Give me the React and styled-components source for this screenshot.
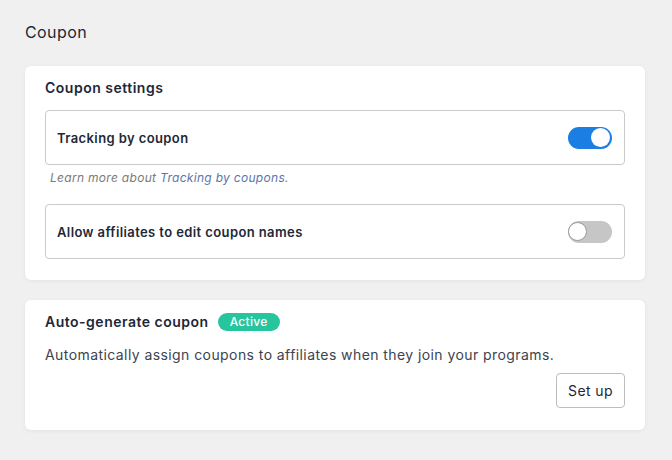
import React from 'react';
import styled, { createGlobalStyle } from 'styled-components';

const GlobalStyle = createGlobalStyle`
  body {
    margin: 0;
    background: #f0f0f0;
    font-family: Inter, "Open Sans", sans-serif;
    color: #1d2838;
  }
`;

const Page = styled.div`
  padding: 20px 27px 30px 25px;
  display: flex;
  flex-direction: column;
`;

const PageTitle = styled.h1`
  font-size: 16px;
  font-weight: 400;
  margin: 0 0 22px;
  line-height: 24px;
  letter-spacing: 0.4px;
  color: #1d2838;
`;

const Card = styled.section`
  background: #fff;
  border-radius: 6px;
  box-shadow: 0 1px 4px rgba(0, 0, 0, 0.06);
  padding: 12px 20px ${(p) => p.$bottom}px;
  margin-bottom: 20px;
`;

const CardTitle = styled.h2`
  font-size: 14px;
  font-weight: 600;
  margin: 0;
  line-height: 20px;
  letter-spacing: 0.5px;
  display: flex;
  align-items: center;
  gap: 9px;
`;

const SettingRow = styled.div`
  border: 1px solid #cacaca;
  border-radius: 4px;
  height: 53px;
  padding: 0 12px 0 11px;
  display: flex;
  align-items: center;
  justify-content: space-between;
  margin-top: ${(p) => p.$top}px;
`;

const RowLabel = styled.span`
  font-size: 13px;
  font-weight: 600;
  letter-spacing: 0.4px;
  color: #1d2838;
`;

const Toggle = styled.span`
  width: 44px;
  height: 22px;
  border-radius: 11px;
  background: ${(p) => (p.$on ? '#1a7ee2' : '#c6c6c6')};
  display: flex;
  align-items: center;
  justify-content: ${(p) => (p.$on ? 'flex-end' : 'flex-start')};
  padding: 0 2px;
  box-sizing: border-box;
`;

const Knob = styled.span`
  width: 19px;
  height: 19px;
  border-radius: 50%;
  background: #fff;
  box-sizing: border-box;
  border: ${(p) => (p.$on ? 'none' : '1px solid #9a9a9a')};
  margin-left: ${(p) => (p.$on ? 0 : -2)}px;
`;

const Helper = styled.p`
  margin: 5px 0 0 5px;
  font-size: 12px;
  font-style: italic;
  letter-spacing: 0.3px;
  color: #7a7a7a;
  line-height: 16px;
`;

const Link = styled.a`
  color: #5a75ad;
  text-decoration: none;
`;

const Badge = styled.span`
  background: #27c59e;
  color: #fff;
  font-size: 12px;
  font-weight: 500;
  letter-spacing: 0.3px;
  border-radius: 9px;
  padding: 0 12px;
  line-height: 18px;
`;

const Description = styled.p`
  margin: 13px 0 0;
  font-size: 14px;
  color: #3c4450;
  letter-spacing: 0.42px;
  line-height: 20px;
`;

const Actions = styled.div`
  display: flex;
  justify-content: flex-end;
  margin-top: 8px;
`;

const Button = styled.button`
  background: #fff;
  border: 1px solid #bdbdbd;
  border-radius: 4px;
  font-family: inherit;
  font-size: 14px;
  letter-spacing: 0.4px;
  color: #1d2838;
  height: 35px;
  padding: 0 11px;
  cursor: pointer;
`;

const Switch = ({ on }) => (
  <Toggle $on={on}>
    <Knob $on={on} />
  </Toggle>
);

export default function App() {
  return (
    <>
      <GlobalStyle />
      <Page>
        <PageTitle>Coupon</PageTitle>
        <Card $bottom={21}>
          <CardTitle>Coupon settings</CardTitle>
          <SettingRow $top={12}>
            <RowLabel>Tracking by coupon</RowLabel>
            <Switch on />
          </SettingRow>
          <Helper>
            Learn more about <Link href="#">Tracking by coupons</Link>.
          </Helper>
          <SettingRow $top={18}>
            <RowLabel>Allow affiliates to edit coupon names</RowLabel>
            <Switch on={false} />
          </SettingRow>
        </Card>
        <Card $bottom={22}>
          <CardTitle>
            Auto-generate coupon <Badge>Active</Badge>
          </CardTitle>
          <Description>
            Automatically assign coupons to affiliates when they join your programs.
          </Description>
          <Actions>
            <Button>Set up</Button>
          </Actions>
        </Card>
      </Page>
    </>
  );
}
